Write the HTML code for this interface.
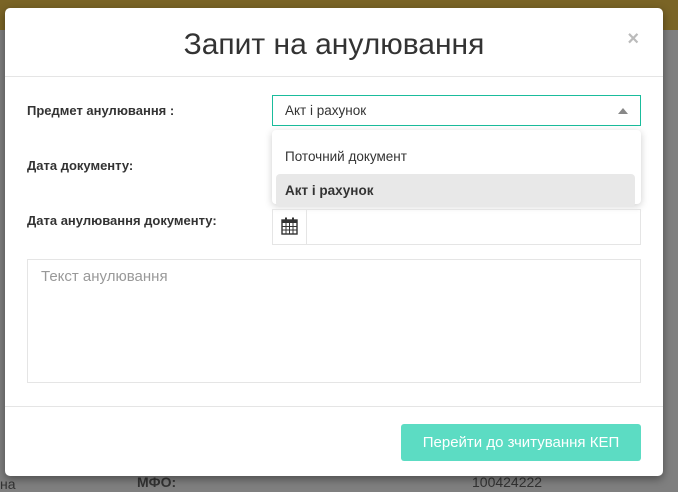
<!DOCTYPE html>
<html><head><meta charset="utf-8"><style>
*{box-sizing:border-box;margin:0;padding:0}
body{width:678px;height:489px;overflow:hidden;background:#7f7f7f;font-family:"Liberation Sans","DejaVu Sans",sans-serif;position:relative}
.top{position:absolute;left:0;top:0;width:678px;height:30px;background:#7a6426}
.bgtxt{position:absolute;color:#333;font-size:14px}
.modal{position:absolute;left:5px;top:8px;width:658px;height:468px;background:#fff;border-radius:5px;box-shadow:0 3px 9px rgba(0,0,0,.4)}
.title{position:absolute;left:0;width:100%;top:20px;text-align:center;font-size:30px;color:#333}
.close{position:absolute;right:24px;top:20px;font-size:20px;color:#bbb;font-weight:bold}
.hr{position:absolute;left:0;width:100%;height:1px;background:#e5e5e5}
.lbl{position:absolute;left:22px;font-size:13px;font-weight:bold;color:#333}
.sel{position:absolute;left:267px;top:87px;width:369px;height:31px;border:1px solid #1abc9c;font-size:13.5px;color:#333;padding:7px 12px}
.arrow{position:absolute;right:12px;top:12px;width:0;height:0;border-left:5px solid transparent;border-right:5px solid transparent;border-bottom:6px solid #888}
.dd{position:absolute;left:267px;top:122px;width:369px;height:74px;background:#fff;border-radius:4px;box-shadow:0 2px 8px rgba(0,0,0,.2)}
.opt{position:absolute;left:4px;width:359px;height:33px;font-size:13.5px;color:#333;padding:9px 9px;border-radius:4px}
.date{position:absolute;left:267px;top:201px;width:369px;height:36px;border:1px solid #e5e5e5}
.cal{position:absolute;left:0;top:0;width:34px;height:34px;border-right:1px solid #e5e5e5}
.ta{position:absolute;left:22px;top:251px;width:614px;height:124px;border:1px solid #e5e5e5;color:#999;font-size:15px;padding:8px 13px}
.btn{position:absolute;left:396px;top:416px;width:240px;height:37px;background:#5cdcc3;color:#fff;border-radius:3px;font-size:15px;text-align:center;line-height:37px}
</style></head><body>
<div class="top"></div>
<div class="bgtxt" style="left:0;top:476px">на</div>
<div class="bgtxt" style="left:137px;top:474px;font-weight:bold">МФО:</div>
<div class="bgtxt" style="left:472px;top:474px">100424222</div>
<div class="modal">
<div class="title">Запит на анулювання</div>
<div class="close">×</div>
<div class="hr" style="top:68px"></div>
<div class="lbl" style="top:95px">Предмет анулювання :</div>
<div class="lbl" style="top:150px">Дата документу:</div>
<div class="lbl" style="top:205px">Дата анулювання документу:</div>
<div class="sel">Акт і рахунок<div class="arrow"></div></div>
<div class="dd">
<div class="opt" style="top:10px">Поточний документ</div>
<div class="opt" style="top:44px;background:#e8e8e8;font-weight:bold">Акт і рахунок</div>
</div>
<div class="date"><div class="cal"><svg width="34" height="34" viewBox="0 0 34 34"><rect x="9" y="10" width="15" height="14" fill="none" stroke="#333" stroke-width="1.4"/><rect x="9" y="10" width="15" height="3" fill="#333"/><path d="M9 16.5h15M9 20h15M13 13v11M16.5 13v11M20 13v11" stroke="#333" stroke-width="1"/><rect x="12" y="7.5" width="2" height="4" fill="#333"/><rect x="19" y="7.5" width="2" height="4" fill="#333"/></svg></div></div>
<div class="ta">Текст анулювання</div>
<div class="hr" style="top:398px"></div>
<div class="btn">Перейти до зчитування КЕП</div>
</div>
</body></html>
